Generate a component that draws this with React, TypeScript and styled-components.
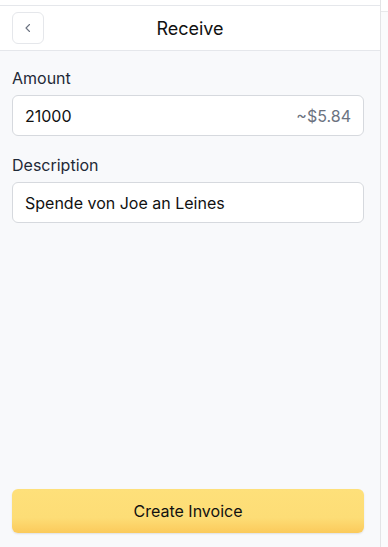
import styled, { createGlobalStyle } from 'styled-components';

const GlobalStyle = createGlobalStyle`
  html, body {
    margin: 0;
    padding: 0;
    height: 100%;
  }
  body {
    font-family: Inter, "Noto Sans", sans-serif;
    color: #111827;
    background: #ffffff;
  }
  #root {
    height: 100%;
  }
`;

const Page = styled.div`
  display: flex;
  height: 547px;
  width: 388px;
  overflow: hidden;
`;

const Panel = styled.div`
  width: 380px;
  display: flex;
  flex-direction: column;
  background: #f8f9fb;
  border-right: 1px solid #e3e4e6;
  box-shadow: 1px 0 2px rgba(0, 0, 0, 0.04);
`;

const SideStrip = styled.div`
  flex: 1;
  background: #fafbfc;
  .line {
    height: 11px;
    border-bottom: 1px solid #e8e9eb;
    background: #ffffff;
  }
`;

const TopStrip = styled.div`
  height: 5px;
  background: #ffffff;
  border-bottom: 1px solid #e5e7eb;
`;

const Header = styled.header`
  position: relative;
  height: 44px;
  display: flex;
  align-items: center;
  justify-content: center;
  background: #ffffff;
  border-bottom: 1px solid #e5e7eb;
`;

const BackButton = styled.button`
  position: absolute;
  left: 12px;
  top: 6px;
  width: 32px;
  height: 32px;
  display: flex;
  align-items: center;
  justify-content: center;
  padding: 0;
  background: #ffffff;
  border: 1px solid #e5e7eb;
  border-radius: 6px;
  color: #6b7280;
  cursor: pointer;
`;

const Title = styled.h1`
  margin: 0;
  font-size: 18px;
  font-weight: 400;
  color: #111111;
`;

const Body = styled.div`
  flex: 1;
  display: flex;
  flex-direction: column;
  padding: 17px 16px 14px 12px;
`;

const Field = styled.div`
  display: flex;
  flex-direction: column;
  gap: 7px;
  margin-bottom: 19px;
`;

const Label = styled.label`
  font-size: 16px;
  font-weight: 400;
  color: #1f2937;
  line-height: 20px;
`;

const InputBox = styled.div`
  height: 41px;
  display: flex;
  align-items: center;
  justify-content: space-between;
  padding: 0 12px 0 12px;
  background: #ffffff;
  border: 1px solid #d6d9de;
  border-radius: 6px;
  font-size: 16px;
  color: #111111;
  box-sizing: border-box;
`;

const Hint = styled.span`
  color: #6b7280;
  font-size: 16px;
`;

const Spacer = styled.div`
  flex: 1;
`;

const PrimaryButton = styled.button`
  height: 44px;
  width: 100%;
  border: none;
  border-radius: 6px;
  background: linear-gradient(180deg, #fee07a 0%, #fddd76 65%, #fbca5b 100%);
  box-shadow: 0 1px 2px rgba(0, 0, 0, 0.1);
  font-family: Inter, "Noto Sans", sans-serif;
  font-size: 16px;
  font-weight: 400;
  color: #111111;
  cursor: pointer;
`;

export default function App() {
  return (
    <>
      <GlobalStyle />
      <Page>
        <Panel>
          <TopStrip />
          <Header>
            <BackButton aria-label="Back">
              <svg width="14" height="14" viewBox="0 0 14 14" fill="none">
                <path d="M8.5 3.5L5 7l3.5 3.5" stroke="#6b7280" strokeWidth="1.1" strokeLinecap="round" strokeLinejoin="round" />
              </svg>
            </BackButton>
            <Title>Receive</Title>
          </Header>
          <Body>
            <Field>
              <Label>Amount</Label>
              <InputBox>
                <span>21000</span>
                <Hint>~$5.84</Hint>
              </InputBox>
            </Field>
            <Field>
              <Label>Description</Label>
              <InputBox>
                <span>Spende von Joe an Leines</span>
              </InputBox>
            </Field>
            <Spacer />
            <PrimaryButton>Create Invoice</PrimaryButton>
          </Body>
        </Panel>
        <SideStrip>
          <div className="line" />
        </SideStrip>
      </Page>
    </>
  );
}
